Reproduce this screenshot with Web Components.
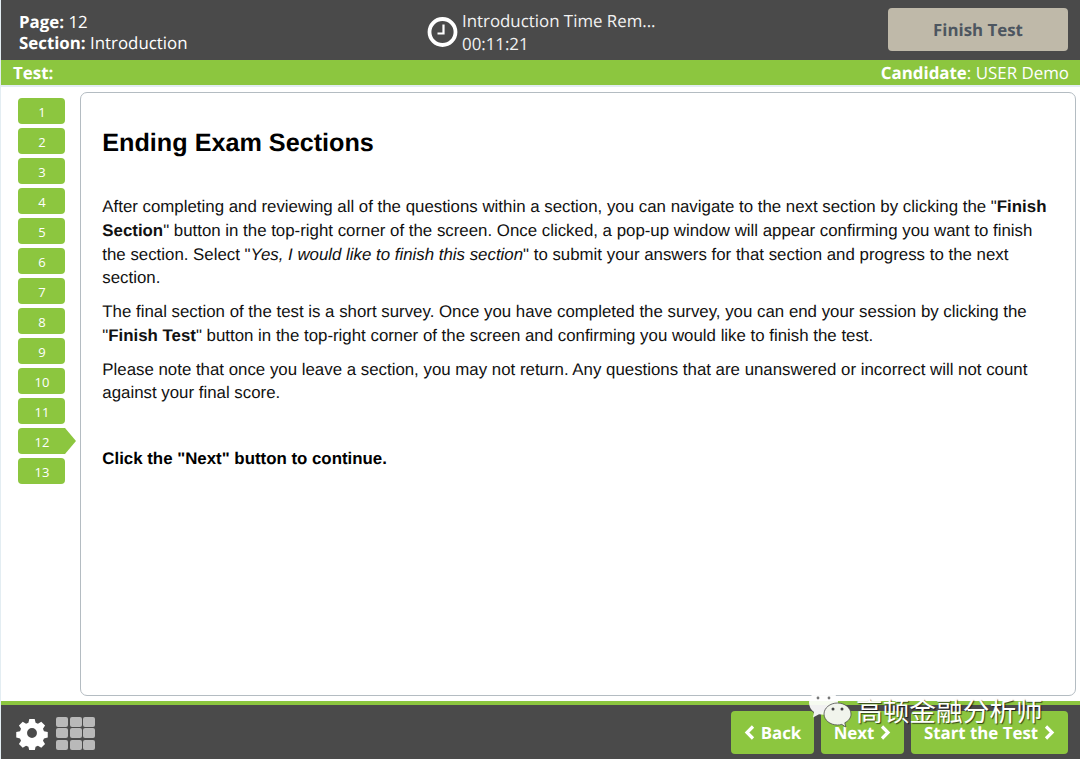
<!DOCTYPE html>
<html lang="en"><head><meta charset="utf-8"><title>Ending Exam Sections</title>
<style>
html,body{margin:0;height:100%;overflow:hidden;background:#fff}
body{font-family:"Open Sans",sans-serif}
</style></head><body>
<exam-app>
  <top-bar slot="top"></top-bar>
  <info-bar slot="info"></info-bar>
  <page-nav slot="nav" count="13" current="12"></page-nav>
  <content-card slot="main">
    <h1>Ending Exam Sections</h1>
    <p>After completing and reviewing all of the questions within a section, you can navigate to the next section by clicking the "<b>Finish Section</b>" button in the top-right corner of the screen. Once clicked, a pop-up window will appear confirming you want to finish the section. Select "<i>Yes, I would like to finish this section</i>" to submit your answers for that section and progress to the next section.</p>
    <p>The final section of the test is a short survey. Once you have completed the survey, you can end your session by clicking the "<b>Finish Test</b>" button in the top-right corner of the screen and confirming you would like to finish the test.</p>
    <p>Please note that once you leave a section, you may not return. Any questions that are unanswered or incorrect will not count against your final score.</p>
    <p class="cta"><b>Click the "Next" button to continue.</b></p>
  </content-card>
  <bottom-bar slot="bottom"></bottom-bar>
  <water-mark slot="overlay"></water-mark>
</exam-app>
<script>
function def(name,html,setup){customElements.define(name,class extends HTMLElement{constructor(){super();this.attachShadow({mode:"open"}).innerHTML=html;}connectedCallback(){if(setup)setup(this);}});}
def("exam-app",`<style>
:host{display:flex;flex-direction:column;position:relative;height:759px;overflow:hidden;border-left:1px solid #e3edf2;box-sizing:border-box}
.mid{flex:1;min-height:0;display:flex;padding:5px 4px 5px 0;gap:0}
</style><slot name="top"></slot><slot name="info"></slot><div class="mid"><slot name="nav"></slot><slot name="main"></slot></div><slot name="bottom"></slot><slot name="overlay"></slot>`);
def("top-bar",`<style>
:host{display:grid;grid-template-columns:426px 461px 1fr;align-items:center;height:60px;background:#4a4a4a;color:#fff;font:16.85px/21px "Open Sans",sans-serif;flex:none;text-rendering:geometricPrecision}
.l{padding:4px 0 0 18px}b{font-weight:700}
.c{display:flex;align-items:center;gap:4px;color:#f2f2f2;padding-top:3px}
.c svg{flex:none;margin-top:1px}
.t{line-height:23px;white-space:nowrap;padding-top:1px}
.btn{width:180px;height:43px;margin-top:-1px;box-sizing:border-box;background:#bfb9a9;border-radius:4px;color:#4d5660;font-weight:700;font-size:16.85px;display:flex;align-items:center;justify-content:center}
</style><div class="l"><div><b>Page:</b> 12</div><div><b>Section:</b> Introduction</div></div>
<div class="c"><svg width="31" height="30" viewBox="0 0 31 30"><circle cx="15.500" cy="15" r="13" fill="none" stroke="#fff" stroke-width="3.8"/><path d="M16.500 7.500V16.500H10.500" fill="none" stroke="#fff" stroke-width="2.200"/></svg><div class="t"><div>Introduction Time Rem...</div><div>00:11:21</div></div></div>
<div class="btn">Finish Test</div>`);
def("info-bar",`<style>
:host{display:flex;justify-content:space-between;align-items:center;height:25px;padding:0 11px 0 12px;background:#8cc63f;color:#fff;font:16.9px/27px "Open Sans",sans-serif;flex:none;text-rendering:geometricPrecision;box-shadow:0 2px 0 #e3edf2;margin-bottom:2px}
b{font-weight:700}
</style><div><b>Test:</b></div><div><b>Candidate</b>: USER Demo</div>`);
def("page-nav",`<style>
:host{display:flex;flex-direction:column;gap:4px;width:79px;flex:none;box-sizing:border-box;padding:6px 0 0 17px}
.n{position:relative;width:47px;height:26px;box-sizing:border-box;padding-left:1px;background:#8cc63f;border-radius:4px;color:#fff;font:13px/28px "Open Sans",sans-serif;text-align:center}
.n.cur{border-radius:4px 0 0 4px}
.n.cur::after{content:"";position:absolute;left:47px;top:0;border-left:11px solid #8cc63f;border-top:13px solid transparent;border-bottom:13px solid transparent}
</style><div id="w" style="display:contents"></div>`,el=>{
 const w=el.shadowRoot.getElementById("w");if(w.children.length)return;
 const c=+el.getAttribute("count"),k=+el.getAttribute("current");
 for(let i=1;i<=c;i++){const d=document.createElement("div");d.className="n"+(i===k?" cur":"");d.textContent=i;w.append(d);}
});
def("content-card",`<style>
:host{display:block;flex:1;min-width:0;box-sizing:border-box;background:#fff;border:1px solid #b4bcc2;border-radius:7px;padding:33px 22px 0 21.300px;color:#111;font:16.85px/23.75px "Liberation Sans",Arial,sans-serif;text-rendering:geometricPrecision}
::slotted(h1){margin:0 0 35px;font:700 25.2px/34px "Liberation Sans",Arial,sans-serif;color:#000}
::slotted(p){margin:0 0 10px}
::slotted(.cta){margin-top:42px;color:#000}
</style><slot></slot>`);
def("bottom-bar",`<style>
:host{display:flex;justify-content:space-between;align-items:flex-start;height:58px;box-sizing:border-box;border-top:4px solid #8cc63f;background:#4a4a4a;padding:6px 12px 0 14px;flex:none}
.i{display:flex;align-items:center;gap:7px;margin-top:5px}
.g{display:grid;grid-template-columns:repeat(3,12px);grid-auto-rows:10px;gap:1.500px}.g i{background:#b9b9b9;border-radius:2px}
.b{display:flex;gap:7px}
.btn{height:43px;box-sizing:border-box;background:#8cc63f;border-radius:4px;color:#fff;font:700 16.85px/42px "Open Sans",sans-serif;text-rendering:geometricPrecision;display:flex;align-items:center;justify-content:center;gap:6px}
svg.ch{flex:none}
</style><div class="i"><svg width="34" height="34" viewBox="0 0 34 34"><path fill="#fff" fill-rule="evenodd" d="M14 1.500h6l1 4.200 2.600 1.100 3.700-2.300 4.200 4.200-2.300 3.700 1.100 2.600 4.200 1v6l-4.200 1-1.100 2.600 2.300 3.700-4.200 4.200-3.700-2.300-2.600 1.100-1 4.200h-6l-1-4.200-2.600-1.100-3.700 2.300-4.200-4.200 2.300-3.700-1.100-2.600-4.200-1v-6l4.200-1 1.100-2.600-2.300-3.700 4.200-4.200 3.700 2.300 2.600-1.100zM17 11.500a5.500 5.500 0 1 0 0 11 5.500 5.500 0 0 0 0-11z" transform="translate(1.700 1.700) scale(.9)"/></svg><div class="g"><i></i><i></i><i></i><i></i><i></i><i></i><i></i><i></i><i></i></div></div>
<div class="b"><div class="btn" style="width:83px"><svg class="ch" width="11" height="15" viewBox="0 0 11 15"><path d="M9 1.500 3 7.500l6 6" fill="none" stroke="#fff" stroke-width="3.200"/></svg>Back</div><div class="btn" style="width:83px">Next<svg class="ch" width="11" height="15" viewBox="0 0 11 15"><path d="M2 1.500 8 7.500l-6 6" fill="none" stroke="#fff" stroke-width="3.200"/></svg></div><div class="btn" style="width:157px">Start the Test<svg class="ch" width="11" height="15" viewBox="0 0 11 15"><path d="M2 1.500 8 7.500l-6 6" fill="none" stroke="#fff" stroke-width="3.200"/></svg></div></div>`);
def("water-mark",`<style>
:host{position:absolute;left:806px;top:690px;display:flex;align-items:flex-start;gap:4px;color:#fff;font:26.700px/40px "Noto Sans CJK SC",sans-serif;text-shadow:1px 1px 1px rgba(0,0,0,.65);white-space:nowrap}
svg{flex:none}
</style><svg width="45" height="40" viewBox="0 0 45 40"><path d="M16.500 0C8.500 0 2 5.500 2 12.500c0 4 2 7.300 5 9.500l-1 5.500 6-3.200c1.400.3 3 .5 4.500.5 8 0 14.500-5.500 14.500-12.800S24.500 0 16.500 0z" fill="#fff" opacity=".92"/><circle cx="11" cy="8" r="1.400" fill="#777"/><circle cx="22" cy="8" r="1.400" fill="#777"/><path d="M30.500 13C23 13 17 18 17 24s6 11 13.500 11c1.500 0 3-.2 4.300-.6l4 2.600-1-4.200c3.700-2 6.200-4.600 6.200-8.800 0-6-6-11-13.500-11z" fill="#f1f4ec" stroke="#4a4a4a" stroke-width=".8"/><circle cx="26" cy="19" r="1.500" fill="#444"/><circle cx="35" cy="19" r="1.500" fill="#444"/></svg><span>高顿金融分析师</span>`);
</script>
</body></html>
